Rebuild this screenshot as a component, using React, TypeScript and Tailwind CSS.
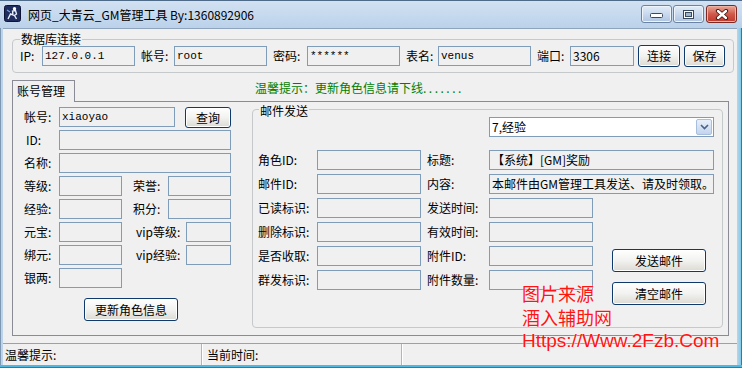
import React from 'react';

type FieldProps = { w: string; value?: string; mono?: boolean; white?: boolean };

const Field: React.FC<FieldProps> = ({ w, value, mono, white }) => (
  <div
    className={`${w} h-[20px] shrink-0 overflow-hidden whitespace-nowrap border border-[#7f9db9] pl-[2px] leading-[18px] ${
      white ? 'bg-white' : 'bg-[#f0f0f0]'
    } ${mono ? "font-['Liberation_Mono','Noto_Sans_CJK_SC',monospace] text-[11px]" : 'text-[12px]'}`}
  >
    {value}
  </div>
);

const Label: React.FC<{ w: string; children: React.ReactNode; className?: string }> = ({ w, children, className }) => (
  <span className={`${w} shrink-0 whitespace-nowrap leading-[14px] ${className ?? ''}`}>{children}</span>
);

const Btn: React.FC<{ w: string; h: string; children: React.ReactNode; className?: string }> = ({ w, h, children, className }) => (
  <div
    className={`${w} ${h} ${className ?? ''} flex shrink-0 items-center justify-center rounded-[3px] border border-[#0f3b6c] bg-linear-to-b from-[#ffffff] via-[#f2f2f0] to-[#dcdad2] text-[12px] leading-none shadow-[inset_0_0_0_1px_#ffffff]`}
  >
    {children}
  </div>
);

const AppIcon = () => (
  <svg width="17" height="17" viewBox="0 0 17 17">
    <rect x="0.5" y="0.5" width="16" height="16" rx="2" fill="#1e2c5e" stroke="#0c1536" />
    <path d="M4 14 L6.5 9 L9 10 L8.5 6 L11.5 5.5 L12.5 9 L10.5 10.5 L12.5 14" stroke="#e6edf8" strokeWidth="1.4" fill="none" />
    <circle cx="10.5" cy="3.8" r="1.7" fill="#ffffff" />
    <path d="M3 5 L6 7" stroke="#7fa6e0" strokeWidth="1.2" />
  </svg>
);

const CaptionButtons = () => (
  <div className="mr-[5px] mt-[4px] ml-auto flex gap-[1px]">
    <div className="flex h-[18px] w-[31px] items-center justify-center rounded-[3px] border border-[#6b84a3] bg-linear-to-b from-[#e4edf8] via-[#c9d9ee] to-[#aec4e0] shadow-[inset_0_0_0_1px_#eef4fb]">
      <svg width="13" height="8" viewBox="0 0 13 8">
        <rect x="0.5" y="3.5" width="12" height="4" rx="1" fill="#ffffff" stroke="#3a4a5e" />
      </svg>
    </div>
    <div className="flex h-[18px] w-[31px] items-center justify-center rounded-[3px] border border-[#6b84a3] bg-linear-to-b from-[#e4edf8] via-[#c9d9ee] to-[#aec4e0] shadow-[inset_0_0_0_1px_#eef4fb]">
      <svg width="11" height="9" viewBox="0 0 11 9">
        <rect x="0.5" y="0.5" width="10" height="8" fill="#ffffff" stroke="#3a4a5e" />
        <rect x="2.5" y="2.5" width="6" height="4" fill="#9fb5d0" stroke="#3a4a5e" />
      </svg>
    </div>
    <div className="ml-[1px] flex h-[18px] w-[31px] items-center justify-center rounded-[3px] border border-[#7a2a22] bg-linear-to-b from-[#e8a797] via-[#d0594b] to-[#c2362a] shadow-[inset_0_0_0_1px_#efb3a6]">
      <svg width="14" height="11" viewBox="0 0 14 11">
        <path d="M3 2 L11 9 M11 2 L3 9" stroke="#3b1510" strokeWidth="4.2" strokeLinecap="round" />
        <path d="M3 2 L11 9 M11 2 L3 9" stroke="#ffffff" strokeWidth="2.4" strokeLinecap="round" />
      </svg>
    </div>
  </div>
);

export default function App() {
  return (
    <div className="relative flex h-[368px] w-[742px] flex-col overflow-hidden bg-[#bcd3ea] font-['Noto_Sans_CJK_SC',sans-serif] text-[12px] text-black">
      {/* title bar */}
      <div className="flex h-[28px] shrink-0 items-start border-t border-[#4f6b8a] bg-linear-to-b from-[#d2e1f2] to-[#bbd2ea]">
        <div className="ml-[4px] mt-[4px]">
          <AppIcon />
        </div>
        <div className="ml-[7px] mt-[6px] text-[12px] leading-[16px] text-[#000000]">网页_大青云_GM管理工具 By:1360892906</div>
        <CaptionButtons />
      </div>

      <div className="flex flex-1">
        <div className="w-[3px] border-l border-[#7d97b3] bg-[#bcd3ea]" />

        {/* client area */}
        <div className="flex flex-1 flex-col border-t border-[#8ea4bc] bg-[#f0f0f0]">
          {/* 数据库连接 */}
          <div className="relative ml-[9px] mr-[3px] mt-[10px] h-[34px] rounded-[4px] border border-[#c6c9cc]">
            <span className="absolute left-[7px] top-[-7px] bg-[#f0f0f0] px-[1px] leading-[12px]">数据库连接</span>
            <div className="mt-[5px] flex h-[22px] items-center pl-[7px]">
              <Label w="w-[22px]">IP:</Label>
              <Field w="w-[93px]" value="127.0.0.1" mono />
              <Label w="w-[33px]" className="ml-[6px]">帐号:</Label>
              <Field w="w-[93px]" value="root" mono />
              <Label w="w-[34px]" className="ml-[6px]">密码:</Label>
              <Field w="w-[93px]" value="******" mono />
              <Label w="w-[32px]" className="ml-[6px]">表名:</Label>
              <Field w="w-[93px]" value="venus" mono />
              <Label w="w-[33px]" className="ml-[6px]">端口:</Label>
              <Field w="w-[64px]" value="3306" />
              <Btn w="w-[42px]" h="h-[22px]" className="ml-[4px]">连接</Btn>
              <Btn w="w-[41px]" h="h-[22px]" className="ml-[4px]">保存</Btn>
            </div>
          </div>

          {/* tab header + hint */}
          <div className="ml-[9px] mt-[7px] flex h-[21px] items-start">
            <div className="relative z-10 h-[22px] w-[63px] border border-b-0 border-[#898c95] bg-[#f0f0f0] pl-[4px] pt-[3px] leading-[14px]">
              账号管理
            </div>
            <div className="ml-[180px] mt-[1px] leading-[14px] text-[#008000]">
              温馨提示：更新角色信息请下线<span className="tracking-[2.5px]">.......</span>
            </div>
          </div>

          {/* tab panel */}
          <div className="ml-[9px] flex h-[235px] w-[717px] border border-[#898c95]">
            {/* 账号管理 left form */}
            <div className="flex w-[218px] shrink-0 flex-col gap-[3px] pl-[11px] pt-[5px]">
              <div className="flex h-[20px] items-start">
                <Label w="w-[35px]" className="mt-[3px]">帐号:</Label>
                <Field w="w-[116px]" value="xiaoyao" mono />
                <Btn w="w-[46px]" h="h-[21px]" className="ml-[10px]">查询</Btn>
              </div>
              <div className="flex h-[20px] items-center">
                <Label w="w-[35px]" className="pl-[2px]">ID:</Label>
                <Field w="w-[172px]" />
              </div>
              <div className="flex h-[20px] items-center">
                <Label w="w-[35px]">名称:</Label>
                <Field w="w-[172px]" />
              </div>
              <div className="flex h-[20px] items-center">
                <Label w="w-[35px]">等级:</Label>
                <Field w="w-[63px]" />
                <Label w="w-[35px]" className="ml-[11px]">荣誉:</Label>
                <Field w="w-[63px]" />
              </div>
              <div className="flex h-[20px] items-center">
                <Label w="w-[35px]">经验:</Label>
                <Field w="w-[63px]" />
                <Label w="w-[35px]" className="ml-[11px]">积分:</Label>
                <Field w="w-[63px]" />
              </div>
              <div className="flex h-[20px] items-center">
                <Label w="w-[35px]">元宝:</Label>
                <Field w="w-[63px]" />
                <Label w="w-[50px]" className="ml-[14px]">vip等级:</Label>
                <Field w="w-[45px]" />
              </div>
              <div className="flex h-[20px] items-center">
                <Label w="w-[35px]">绑元:</Label>
                <Field w="w-[63px]" />
                <Label w="w-[50px]" className="ml-[14px]">vip经验:</Label>
                <Field w="w-[45px]" />
              </div>
              <div className="flex h-[20px] items-center">
                <Label w="w-[35px]">银两:</Label>
                <Field w="w-[63px]" />
              </div>
              <Btn w="w-[94px]" h="h-[23px]" className="ml-[60px] mt-[7px]">更新角色信息</Btn>
            </div>

            {/* 邮件发送 */}
            <div className="relative ml-[21px] mt-[7px] h-[219px] w-[471px] rounded-[4px] border border-[#c6c9cc]">
              <span className="absolute left-[6px] top-[-5px] bg-[#f0f0f0] px-[1px] leading-[12px]">邮件发送</span>

              <div className="ml-[236px] mt-[7px] flex h-[20px] w-[225px] items-center border border-[#7f9db9] bg-white pl-[2px]">
                <span className="leading-[14px]">7,经验</span>
                <div className="ml-auto mr-[1px] flex h-[16px] w-[16px] items-center justify-center rounded-[2px] border border-[#a7bedc] bg-linear-to-b from-[#e9f0fa] to-[#c2d4ee]">
                  <svg width="9" height="6" viewBox="0 0 9 6">
                    <path d="M1 1 L4.5 4.5 L8 1" stroke="#4d6185" strokeWidth="1.6" fill="none" />
                  </svg>
                </div>
              </div>

              <div className="mt-[13px] flex flex-col gap-[4px] pl-[5px]">
                <div className="flex h-[20px] items-center">
                  <Label w="w-[59px]">角色ID:</Label>
                  <Field w="w-[104px]" />
                  <Label w="w-[62px]" className="ml-[6px]">标题:</Label>
                  <Field w="w-[225px]" value="【系统】[GM]奖励" />
                </div>
                <div className="flex h-[20px] items-center">
                  <Label w="w-[59px]">邮件ID:</Label>
                  <Field w="w-[104px]" />
                  <Label w="w-[62px]" className="ml-[6px]">内容:</Label>
                  <Field w="w-[225px]" value="本邮件由GM管理工具发送、请及时领取。" />
                </div>
                <div className="flex">
                  <div className="flex flex-col gap-[4px]">
                    <div className="flex h-[20px] items-center">
                      <Label w="w-[59px]">已读标识:</Label>
                      <Field w="w-[104px]" />
                      <Label w="w-[62px]" className="ml-[6px]">发送时间:</Label>
                      <Field w="w-[104px]" />
                    </div>
                    <div className="flex h-[20px] items-center">
                      <Label w="w-[59px]">删除标识:</Label>
                      <Field w="w-[104px]" />
                      <Label w="w-[62px]" className="ml-[6px]">有效时间:</Label>
                      <Field w="w-[104px]" />
                    </div>
                    <div className="flex h-[20px] items-center">
                      <Label w="w-[59px]">是否收取:</Label>
                      <Field w="w-[104px]" />
                      <Label w="w-[62px]" className="ml-[6px]">附件ID:</Label>
                      <Field w="w-[104px]" />
                    </div>
                    <div className="flex h-[20px] items-center">
                      <Label w="w-[59px]">群发标识:</Label>
                      <Field w="w-[104px]" />
                      <Label w="w-[62px]" className="ml-[6px]">附件数量:</Label>
                      <Field w="w-[104px]" />
                    </div>
                  </div>
                  <div className="ml-[19px] mt-[51px] flex flex-col gap-[10px]">
                    <Btn w="w-[94px]" h="h-[23px]">发送邮件</Btn>
                    <Btn w="w-[94px]" h="h-[23px]">清空邮件</Btn>
                  </div>
                </div>
              </div>
            </div>
          </div>

          {/* status bar */}
          <div className="mt-auto flex h-[22px] border-t border-[#a0a0a0]">
            <div className="flex w-[199px] items-center border-r border-[#b5b5b5] pl-[2px] shadow-[1px_0_0_#ffffff]">
              <span className="leading-[14px]">温馨提示:</span>
            </div>
            <div className="ml-[1px] flex w-[199px] items-center border-r border-[#b5b5b5] pl-[4px] shadow-[1px_0_0_#ffffff]">
              <span className="leading-[14px]">当前时间:</span>
            </div>
          </div>
        </div>

        <div className="w-[5px] border-r border-[#2f7ba6] bg-linear-to-r from-[#bcd3ea] to-[#7ccbe8]" />
      </div>
      <div className="h-[3px] shrink-0 border-b border-[#2f7ba6] bg-[#4fb8e0]" />

      {/* watermark */}
      <div className="absolute left-[522px] top-[282px] text-[18px] leading-[23.5px] text-[#ff1414] [text-shadow:0_0_2px_#ffffff]">
        <div>图片来源</div>
        <div>酒入辅助网</div>
        <div className="font-['Liberation_Sans',sans-serif] text-[19px]">Https://Www.2Fzb.Com</div>
      </div>
    </div>
  );
}
